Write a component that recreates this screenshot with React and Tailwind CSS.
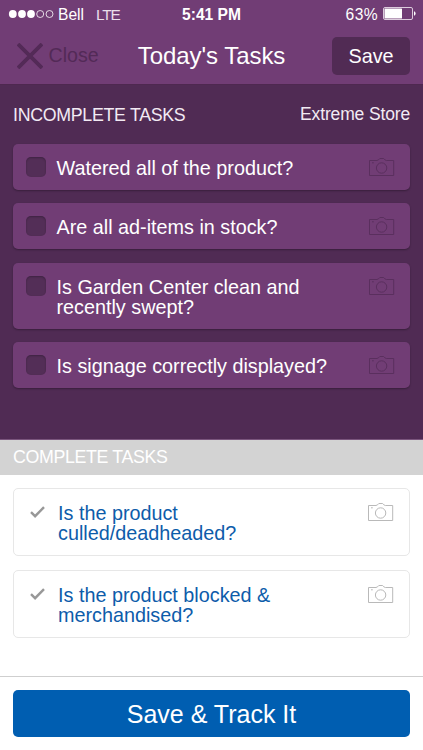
import clsx from "clsx";

const incompleteTasks = [
	{ id: 1, title: "Watered all of the product?" },
	{ id: 2, title: "Are all ad-items in stock?" },
	{ id: 3, title: "Is Garden Center clean and recently swept?" },
	{ id: 4, title: "Is signage correctly displayed?" },
];

const completeTasks = [
	{ id: 5, title: "Is the product culled/deadheaded?" },
	{ id: 6, title: "Is the product blocked & merchandised?" },
];

function CameraIcon({ className }) {
	return (
		<svg
			className={clsx("w-[26px] h-5 shrink-0", className)}
			viewBox="0 0 26 20"
			fill="none"
			stroke="currentColor"
		>
			<path d="M.5 3.5H8L9.6 2.8L10.8 1.5H14.6L15.8 2.8L17.4 3.5H24.7V18.5H.5Z" />
			<circle cx="12.6" cy="11" r="5.2" />
			<path d="M3 5.8H4.8" />
		</svg>
	);
}

function StatusBar() {
	return (
		<div className="relative flex justify-between items-center h-7 pl-2 pr-[7px] text-[15.6px]">
			<div className="flex items-center">
				<svg className="w-[46px] h-2" viewBox="0 0 46 8">
					<g fill="white">
						<circle cx="4.8" cy="4" r="3.9" />
						<circle cx="14" cy="4" r="3.9" />
						<circle cx="23" cy="4" r="3.9" />
					</g>
					<g fill="none" stroke="white" strokeWidth=".8">
						<circle cx="32.2" cy="4" r="3.5" />
						<circle cx="41.5" cy="4" r="3.5" />
					</g>
				</svg>
				<span className="ml-1 pt-px">Bell</span>
				<span className="ml-3 pt-px text-[15.4px] tracking-[-1.2px] text-[#eadfeb]">LTE</span>
			</div>
			<span className="absolute inset-x-0 pt-px text-center text-[15.6px] font-bold">5:41 PM</span>
			<div className="flex items-center gap-[5px]">
				<span className="pt-px tracking-[0.4px]">63%</span>
				<svg className="w-[33px] h-[13px]" viewBox="0 0 33 13">
					<rect
						x=".5"
						y=".5"
						width="29"
						height="12"
						rx="1.5"
						fill="none"
						stroke="#dccbdc"
					/>
					<rect x="1.5" y="1.5" width="17.5" height="10" rx=".5" fill="white" />
					<path d="M31 4.2Q32.6 4.8 32.6 6.5T31 8.8Z" fill="white" />
				</svg>
			</div>
		</div>
	);
}

function TaskCard({ title, done }) {
	return (
		<li
			className={clsx(
				"flex items-start rounded-[5px] pr-[15px] text-[19.8px] leading-5",
				done
					? "border-[1.5px] border-[#e7e7e7] bg-white pl-4 pt-[13px] pb-3 text-[#0d5caa]"
					: "bg-[#713d75] pl-[13px] pt-[13px] pb-3 text-white shadow-[0_1px_2px_rgba(0,0,0,0.3)]"
			)}
		>
			{done ? (
				<svg
					className="w-[15px] h-3 mt-[4px] mr-[13px] shrink-0"
					viewBox="0 0 15 12"
					fill="none"
					stroke="#989898"
					strokeWidth="2.4"
				>
					<path d="M1 6.2L5.1 10.2L14 1.2" />
				</svg>
			) : (
				<span className="w-5 h-5 mr-[10.5px] shrink-0 rounded-[5px] bg-[#532e57] shadow-[inset_0_1px_2px_rgba(0,0,0,0.25)]" />
			)}
			<span className="w-[272px] mr-auto pt-px">{title}</span>
			<CameraIcon className={done ? "text-[#b9b9b9]" : "text-[#5a2f5e]"} />
		</li>
	);
}

export default function App() {
	return (
		<div className="flex flex-col w-[423px] h-[750px] overflow-hidden bg-white font-['Liberation_Sans',Arial,sans-serif]">
			<header className="h-[85px] bg-[#713d75] border-b border-[#4e2850] text-white">
				<StatusBar />
				<div className="grid grid-cols-[1fr_auto_1fr] items-center h-14 px-[13px]">
					<button className="flex items-center ml-1 text-[19.6px] text-[#532a57]">
						<svg
							className="w-[26px] h-[26px] mr-[5.5px]"
							viewBox="0 0 26 26"
							stroke="currentColor"
							strokeWidth="3.8"
						>
							<path d="M1 1L25 25M25 1L1 25" />
						</svg>
						Close
					</button>
					<h1 className="text-[24px] tracking-[-0.05px]">Today's Tasks</h1>
					<button className="justify-self-end w-[78px] h-[38px] rounded-[5px] bg-[#512b54] pt-px text-[19.8px]">
						Save
					</button>
				</div>
			</header>
			<section className="h-[354.5px] px-[13px] bg-[#502b54] border-b border-[#7a557d]">
				<div className="flex justify-between items-center h-[59px] text-[#f2eaf3]">
					<h2 className="pt-px text-[17.8px] tracking-[-0.3px]">INCOMPLETE TASKS</h2>
					<span className="text-[17.5px] tracking-[-0.15px]">Extreme Store</span>
				</div>
				<ul className="flex flex-col gap-[13.3px]">
					{incompleteTasks.map((task) => (
						<TaskCard key={task.id} title={task.title} />
					))}
				</ul>
			</section>
			<section className="grow">
				<h2 className="h-[35px] px-[13px] bg-[#d3d3d3] text-[17.8px] tracking-[-0.35px] leading-[35px] text-white">
					COMPLETE TASKS
				</h2>
				<ul className="flex flex-col gap-[14px] px-[13px] pt-[13.5px]">
					{completeTasks.map((task) => (
						<TaskCard key={task.id} title={task.title} done />
					))}
				</ul>
			</section>
			<footer className="h-[74px] px-[13px] pt-[13px] border-t border-[#cfcfcf]">
				<button className="w-full h-[46.5px] rounded-[5px] bg-[#005eb1] pt-0.5 text-[25px] text-white">
					Save &amp; Track It
				</button>
			</footer>
		</div>
	);
}
